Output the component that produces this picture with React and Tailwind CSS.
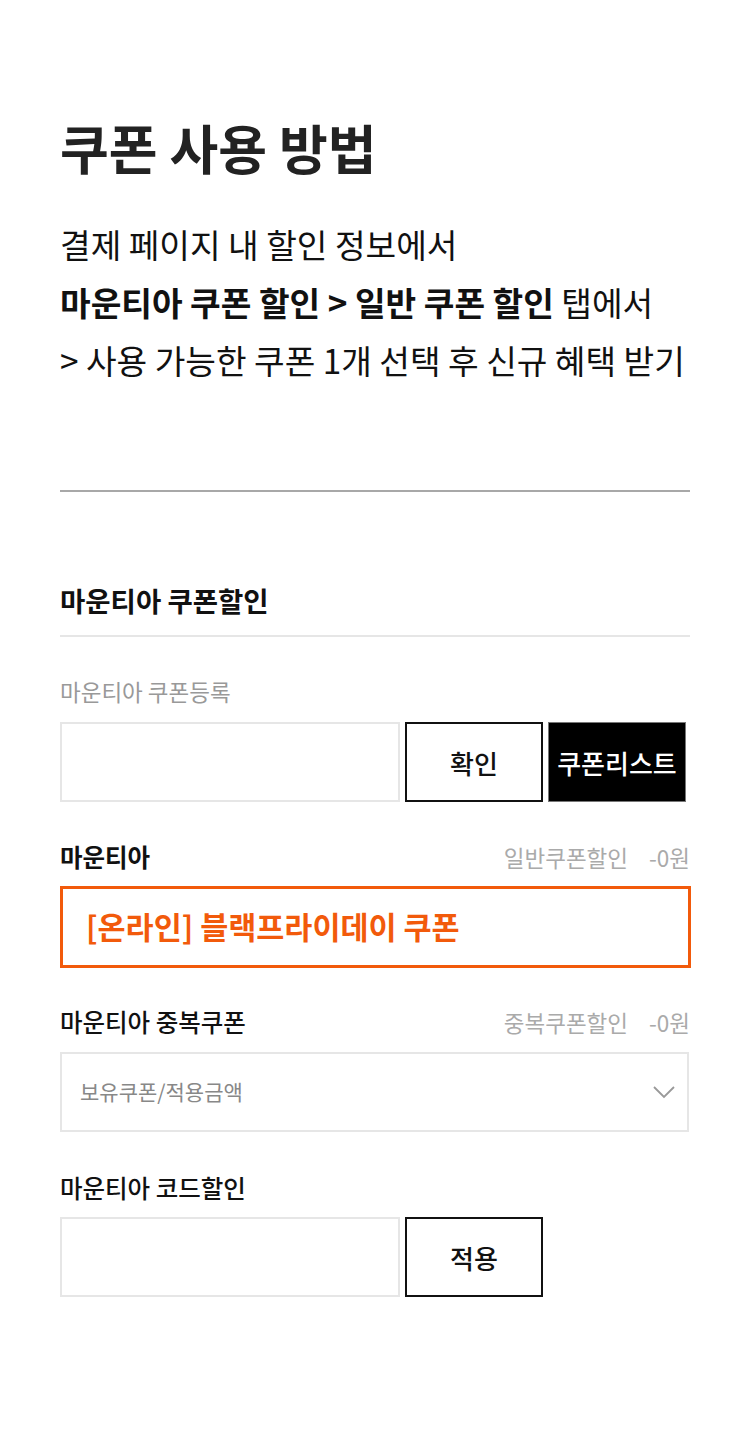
export default function App() {
  return (
    <div
      className="min-h-[1450px] w-[750px] bg-white px-[60px] text-[#111]"
      style={{ fontFamily: '"Noto Sans CJK KR", "Noto Sans", sans-serif' }}
    >
      {/* 안내 */}
      <h1 className="pt-[117px] text-[53px] font-bold leading-[60px] text-[#222]">
        쿠폰 사용 방법
      </h1>
      <div className="mt-[38px] text-[33.3px] leading-[58px]">
        <p>결제 페이지 내 할인 정보에서</p>
        <p>
          <b className="font-bold">마운티아 쿠폰 할인 &gt; 일반 쿠폰 할인</b> 탭에서
        </p>
        <p>&gt; 사용 가능한 쿠폰 1개 선택 후 신규 혜택 받기</p>
      </div>

      <div className="mt-[101px] h-[2px] bg-[#a8a8a8]" />

      {/* 쿠폰할인 */}
      <h2 className="mt-[91px] text-[27.5px] font-bold leading-[34px]">
        마운티아 쿠폰할인
      </h2>
      <div className="mt-[18px] h-[2px] bg-[#e6e6e6]" />

      <p className="mt-[39px] text-[22.5px] leading-[30px] text-[#999]">
        마운티아 쿠폰등록
      </p>
      <div className="mt-[16px] flex h-[80px] gap-[5px]">
        <input className="h-full w-[340px] border-2 border-[#e6e6e6] outline-none" />
        <button className="h-full w-[138px] border-2 border-[#111] bg-white text-[26px] font-medium">
          확인
        </button>
        <button className="h-full w-[138px] border border-[#777] bg-black text-[26px] font-medium text-white">
          쿠폰리스트
        </button>
      </div>

      <div className="mt-[40px] flex items-center justify-between text-[22.5px] leading-[30px]">
        <span className="text-[24.5px] font-bold">마운티아</span>
        <span className="flex gap-[21px] text-[#aaa]">
          <span>일반쿠폰할인</span>
          <span>-0원</span>
        </span>
      </div>
      <div className="mt-[14px] -mr-px flex h-[82px] items-center border-[3px] border-[#f25a0b] px-[23px]">
        <span className="text-[30.5px] font-bold text-[#f25a0b]">
          [온라인] 블랙프라이데이 쿠폰
        </span>
      </div>

      {/* 중복쿠폰 */}
      <div className="mt-[39px] flex items-center justify-between text-[22.5px] leading-[30px]">
        <span className="text-[24.5px] font-medium">마운티아 중복쿠폰</span>
        <span className="flex gap-[21px] text-[#aaa]">
          <span>중복쿠폰할인</span>
          <span>-0원</span>
        </span>
      </div>
      <div className="mt-[15px] mr-px flex h-[80px] items-center justify-between border-2 border-[#e6e6e6] pl-[18px] pr-[11px]">
        <span className="text-[21px] text-[#888]">보유쿠폰/적용금액</span>
        <svg width="24" height="14" viewBox="0 0 24 14" fill="none">
          <polyline points="2,2 12,12 22,2" stroke="#999" strokeWidth="1.8" />
        </svg>
      </div>

      {/* 코드할인 */}
      <p className="mt-[41px] text-[24.5px] font-medium leading-[30px]">
        마운티아 코드할인
      </p>
      <div className="mt-[14px] flex h-[80px] gap-[5px]">
        <input className="h-full w-[340px] border-2 border-[#e6e6e6] outline-none" />
        <button className="h-full w-[138px] border-2 border-[#111] bg-white text-[26px] font-medium">
          적용
        </button>
      </div>
    </div>
  )
}
